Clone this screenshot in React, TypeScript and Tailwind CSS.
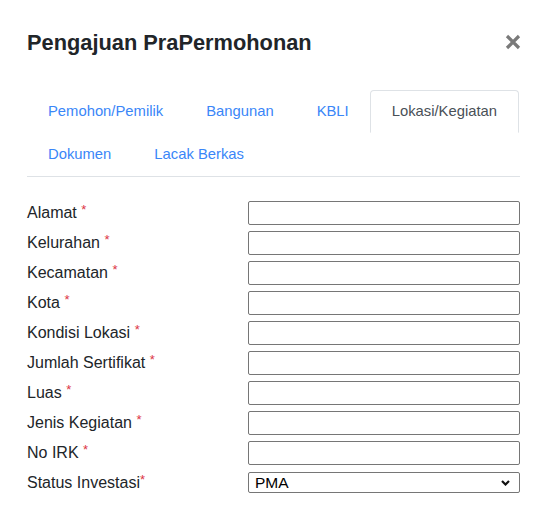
import { useState } from 'react';

const tabsRow1 = ['Pemohon/Pemilik', 'Bangunan', 'KBLI', 'Lokasi/Kegiatan'];
const tabsRow2 = ['Dokumen', 'Lacak Berkas'];

const fields: { label: string; space: boolean }[] = [
  { label: 'Alamat', space: true },
  { label: 'Kelurahan', space: true },
  { label: 'Kecamatan', space: true },
  { label: 'Kota', space: true },
  { label: 'Kondisi Lokasi', space: true },
  { label: 'Jumlah Sertifikat', space: true },
  { label: 'Luas', space: true },
  { label: 'Jenis Kegiatan', space: true },
  { label: 'No IRK', space: true },
];

function Tab({ name, active, onClick }: { name: string; active: boolean; onClick: () => void }) {
  return (
    <button
      onClick={onClick}
      className={`h-[43px] px-[20.5px] flex items-center rounded-t-[4px] border ${
        active
          ? 'border-[#dee2e6] border-b-white text-[#495057] bg-white -mb-px'
          : 'border-transparent text-[#3a86f8]'
      }`}
    >
      {name}
    </button>
  );
}

function Label({ text, space }: { text: string; space: boolean }) {
  return (
    <label className="w-[221px] shrink-0 text-[16px] leading-[24px] text-[#212529]">
      {text}
      {space && ' '}
      <sup className="text-[13px] text-[#dc3545] relative -top-[4px]">*</sup>
    </label>
  );
}

export default function App() {
  const [active, setActive] = useState('Lokasi/Kegiatan');

  return (
    <div className="min-h-[517px] bg-white pl-[27px] pr-[20px] pt-[30px] font-['Liberation_Sans',Arial,sans-serif] text-[14.8px]">
      <div className="flex items-start justify-between">
        <h4 className="text-[21.8px] leading-[26px] font-bold text-[#212529]">Pengajuan PraPermohonan</h4>
        <button className="mt-[4px] -mr-[1px]" aria-label="Close">
          <svg width="16" height="16" viewBox="0 0 16 16">
            <path d="M2 2L14 14M14 2L2 14" stroke="#7a7a7a" strokeWidth="3.2" strokeLinecap="butt" />
          </svg>
        </button>
      </div>

      <div className="mt-[34px] border-b border-[#dee2e6]">
        <div className="flex -ml-[0.5px]">
          {tabsRow1.map((t) => (
            <Tab key={t} name={t} active={active === t} onClick={() => setActive(t)} />
          ))}
        </div>
        <div className="flex -ml-[0.5px]">
          {tabsRow2.map((t) => (
            <Tab key={t} name={t} active={active === t} onClick={() => setActive(t)} />
          ))}
        </div>
      </div>

      <form className="mt-[24px] flex flex-col gap-[6px]">
        {fields.map((f) => (
          <div key={f.label} className="flex items-center">
            <Label text={f.label} space={f.space} />
            <input
              type="text"
              className="flex-1 h-[24px] border border-[#767676] rounded-[2px] bg-white px-1 text-black"
            />
          </div>
        ))}
        <div className="flex items-center h-[24px]">
          <Label text="Status Investasi" space={false} />
          <div className="relative flex-1">
            <select
              defaultValue="PMA"
              className="appearance-none w-full h-[21px] border border-[#767676] rounded-[2px] bg-white pl-[6px] text-[15.5px] leading-[19px] text-black"
            >
              <option value="PMA">PMA</option>
              <option value="PMDN">PMDN</option>
            </select>
            <svg
              className="absolute right-[10px] top-[8px] pointer-events-none"
              width="9"
              height="6"
              viewBox="0 0 9 6"
            >
              <path d="M1 1L4.5 4.5L8 1" fill="none" stroke="#111" strokeWidth="2.2" />
            </svg>
          </div>
        </div>
      </form>
    </div>
  );
}
